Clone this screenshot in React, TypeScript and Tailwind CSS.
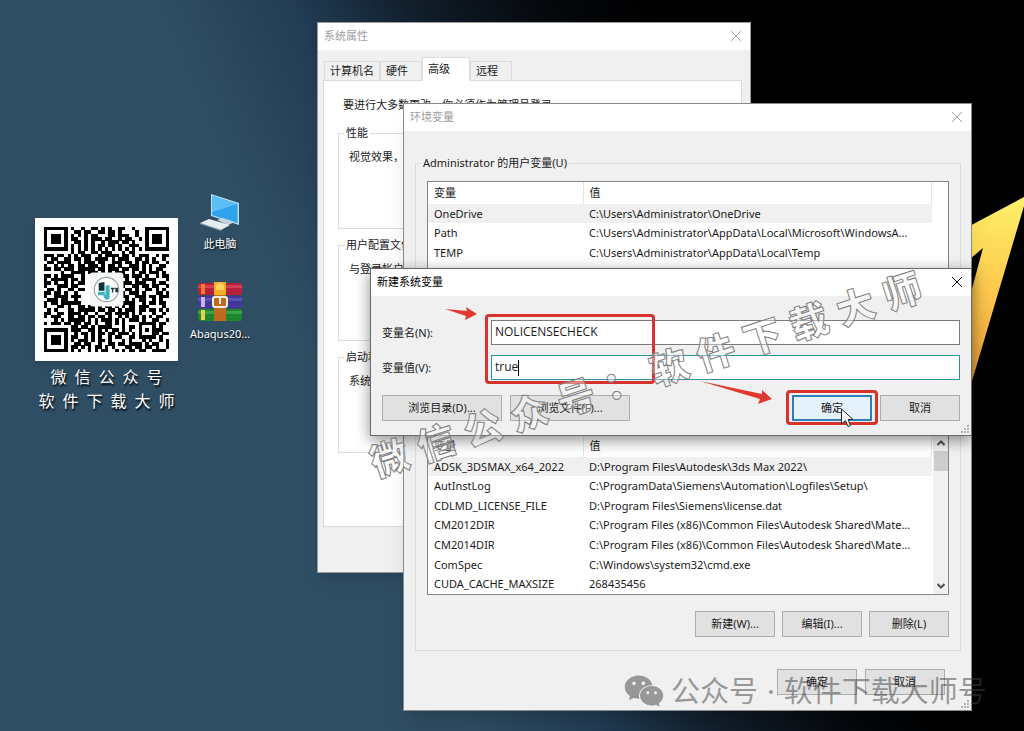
import React from 'react';
import { AiFillWechat } from 'react-icons/ai';

type Variable = { name: string; value: string };

const userVariables: Variable[] = [
  { name: 'OneDrive', value: 'C:\\Users\\Administrator\\OneDrive' },
  { name: 'Path', value: 'C:\\Users\\Administrator\\AppData\\Local\\Microsoft\\WindowsA...' },
  { name: 'TEMP', value: 'C:\\Users\\Administrator\\AppData\\Local\\Temp' },
  { name: 'TMP', value: 'C:\\Users\\Administrator\\AppData\\Local\\Temp' },
];

const systemVariables: Variable[] = [
  { name: 'ADSK_3DSMAX_x64_2022', value: 'D:\\Program Files\\Autodesk\\3ds Max 2022\\' },
  { name: 'AutInstLog', value: 'C:\\ProgramData\\Siemens\\Automation\\Logfiles\\Setup\\' },
  { name: 'CDLMD_LICENSE_FILE', value: 'D:\\Program Files\\Siemens\\license.dat' },
  { name: 'CM2012DIR', value: 'C:\\Program Files (x86)\\Common Files\\Autodesk Shared\\Mate...' },
  { name: 'CM2014DIR', value: 'C:\\Program Files (x86)\\Common Files\\Autodesk Shared\\Mate...' },
  { name: 'ComSpec', value: 'C:\\Windows\\system32\\cmd.exe' },
  { name: 'CUDA_CACHE_MAXSIZE', value: '268435456' },
];

// QR modules, 37 x 37; the three finder squares are drawn separately
const qrRows = [
  '........#..#..##.#.#..##..#..........',
  '.........##.##..##.##.#....#.........',
  '........#.#.#.##...##.###..#.........',
  '........##..#.###.##..#.##..#........',
  '.........##.#.#..#.###.##.#..........',
  '........#.#.#.#.##.##.#..###.........',
  '........#.#.#.#.#.#.#.#.#.#.#........',
  '........#.##..##.###...#.##..........',
  '###.##.#.#.###..#.####.##.#.###..#.##',
  '#.##..##.##.##.####.#.###..##.#.#..#.',
  '.##.####..#.###.##..###.##.#.##.##..#',
  '#..#.#.##.##.###.#.##.#..###.#.#..##.',
  '##.##.###.#####.##.###.##.##.#.#.##..',
  '.....#..####.###.#.#.###..#.##.###.#.',
  '##.#.####..#...........##.###.#..#.##',
  '#.#####.##.#............#..#.####...#',
  '##.#..#.#.##...........###.###..#.##.',
  '#...###.##.............#..##.##.##..#',
  '.##.#..##.##............##.#..##.#.#.',
  '##.##.#..#.............#.###.#...##.#',
  '#..####.###............##..###.##.###',
  '.###.##..#..............#.#.##..#.#..',
  '#.##.######............####..#.##.##.',
  '#...##.#..##.##.#.##.#.#.##.###....#.',
  '.#.#...##.#####.##.##.#.###.##.##.#.#',
  '##..##.####.#..#..##.####.#.#...#..#.',
  '#.###..##.##.##.##.#..#.#.##.#.#.##..',
  '...#.#.#####.#.#.###.#.#.###.#..##..#',
  '#.###.##.##.##.#..##.#.#....#####.##.',
  '........##.##.#.####...#.##.#...#.#..',
  '........###..##.#.#.##.#.#..#.#.###..',
  '.........#.##.#.##.##.###.#.#...##.##',
  '........##..#.#.#..#.##..##.#####.#..',
  '........#.###.#.##.#...#.#...#.#..#.#',
  '.........##.##..#..##.##.####.#.##..#',
  '........##.#.#.##.#.#...##.##.##.#..#.',
  '........#.#..#.#.##..#.#.##.##..####.',
];

const buttonBase =
  'flex items-center justify-center h-[26px] border border-[#adadad] bg-[#e1e1e1] hover:border-[#0078d7] hover:bg-[#e5f1fb]';

const PushButton: React.FC<{ label: string; wide?: boolean }> = ({ label, wide }) => (
  <button type="button" className={`${buttonBase} ${wide ? 'w-[120px]' : 'w-20'}`}>
    {label}
  </button>
);

const TitleBar: React.FC<{ title: string; active?: boolean }> = ({ title, active }) => (
  <header
    className={`flex h-[27px] items-center justify-between bg-white pb-0.5 pl-1.5 pr-2 ${
      active ? 'text-black' : 'text-[#a0a0a0]'
    }`}
  >
    <h2>{title}</h2>
    <button type="button" aria-label="关闭">
      <svg className="size-3" viewBox="0 0 12 12" fill="none" stroke="currentColor">
        <path d="M1 1l10 10M11 1L1 11" />
      </svg>
    </button>
  </header>
);

const ResizeGrip: React.FC = () => (
  <svg className="absolute bottom-0.5 right-0.5 size-2" viewBox="0 0 8 8" fill="#b4b4b4">
    <path d="M6 0h2v2h-2zM3 3h2v2h-2zM6 3h2v2h-2zM0 6h2v2h-2zM3 6h2v2h-2zM6 6h2v2h-2z" />
  </svg>
);

const VariableTable: React.FC<{ rows: Variable[] }> = ({ rows }) => (
  <table className="w-[504px] table-fixed text-left">
    <thead>
      <tr className="h-[22px]">
        <th className="w-[155px] border-r border-[#e5e5e5] pl-1.5 font-normal">变量</th>
        <th className="border-r border-[#e5e5e5] pl-1.5 font-normal">值</th>
      </tr>
    </thead>
    <tbody>
      {rows.map((row) => (
        <tr key={row.name} className="h-[19px] even:h-5 first:bg-[#f0f0f0]">
          <td className="whitespace-nowrap pl-1.5">{row.name}</td>
          <td className="whitespace-nowrap pl-1.5">{row.value}</td>
        </tr>
      ))}
    </tbody>
  </table>
);

const VariableButtons: React.FC<{ keys: string[] }> = ({ keys }) => (
  <div className="mt-4 flex justify-end gap-[7px]">
    <PushButton label={`新建(${keys[0]})...`} />
    <PushButton label={`编辑(${keys[1]})...`} />
    <PushButton label={`删除(${keys[2]})`} />
  </div>
);

const SystemProperties: React.FC = () => (
  <section className="absolute left-[317px] top-[22px] flex h-[551px] w-[434px] flex-col border border-[#9a9a9a] bg-[#f0f0f0] shadow-lg">
    <TitleBar title="系统属性" />
    <div className="flex grow flex-col pb-[45px] pl-[5px] pr-2 pt-[7px]">
      <div className="flex items-end pl-px" role="tablist">
        {['计算机名', '硬件', '高级', '远程'].map((tab) => (
          <button
            key={tab}
            type="button"
            role="tab"
            aria-selected={tab === '高级'}
            className="-mb-px h-5 border border-[#dcdcdc] px-[5px] text-left not-first:w-[42px] aria-selected:z-10 aria-selected:h-6 aria-selected:w-12 aria-selected:border-b-white aria-selected:bg-white"
          >
            {tab}
          </button>
        ))}
      </div>
      <div className="grow border border-[#dcdcdc] bg-white px-3.5 pt-4">
        <p className="mb-3 pl-[5px]">要进行大多数更改，你必须作为管理员登录。</p>
        {[
          ['性能', '视觉效果，处理器计划，内存使用，以及虚拟内存'],
          ['用户配置文件', '与登录帐户相关的桌面设置'],
          ['启动和故障恢复', '系统启动、系统故障和调试信息'],
        ].map(([legend, text]) => (
          <fieldset key={legend} className="mb-2 h-[104px] border border-[#dcdcdc] px-2.5 pt-2">
            <legend className="-ml-[5px] px-0.5">{legend}</legend>
            <p>{text}</p>
          </fieldset>
        ))}
      </div>
    </div>
  </section>
);

const EnvironmentVariables: React.FC = () => (
  <section className="absolute left-[403px] top-[103px] w-[569px] border border-[#8a8a8a] bg-[#f0f0f0] shadow-xl">
    <TitleBar title="环境变量" />
    <div className="pb-[15px] pl-[11px] pr-2.5 pt-6">
      <fieldset className="border border-[#dcdcdc] px-[11px] pb-[13px] pt-2.5">
        <legend className="-ml-1.5 px-0.5">Administrator 的用户变量(U)</legend>
        <div className="h-[156px] border border-[#828790] bg-white">
          <VariableTable rows={userVariables} />
        </div>
        <VariableButtons keys={['N', 'E', 'D']} />
      </fieldset>
      <fieldset className="mt-[15px] border border-[#dcdcdc] px-[11px] pb-[13px] pt-2.5">
        <legend className="-ml-1.5 px-0.5">系统变量(S)</legend>
        <div className="flex h-[161px] justify-between border border-[#828790] bg-white">
          <VariableTable rows={systemVariables} />
          <div className="flex w-[15px] flex-col items-center justify-between bg-[#f0f0f0] py-1">
            <div className="flex w-full flex-col items-center gap-1">
              <svg className="size-2" viewBox="0 0 8 8" fill="none" stroke="#505050" strokeWidth="2">
                <path d="M0.5 6L4 2.5L7.5 6" />
              </svg>
              <div className="h-5 w-3.5 bg-[#cdcdcd]" />
            </div>
            <svg className="size-2" viewBox="0 0 8 8" fill="none" stroke="#505050" strokeWidth="2">
              <path d="M0.5 2L4 5.5L7.5 2" />
            </svg>
          </div>
        </div>
        <VariableButtons keys={['W', 'I', 'L']} />
      </fieldset>
      <div className="mt-[18px] flex justify-end gap-2 pr-4">
        <PushButton label="确定" />
        <PushButton label="取消" />
      </div>
    </div>
    <ResizeGrip />
  </section>
);

const NewVariableDialog: React.FC = () => (
  <section
    role="dialog"
    className="absolute left-[370px] top-[268px] w-[602px] border border-[#6a6a6a] bg-[#f0f0f0] shadow-[0_4px_14px_rgba(0,0,0,0.45)]"
  >
    <TitleBar title="新建系统变量" active />
    <div className="flex flex-col gap-2.5 px-[11px] pb-3.5 pt-6">
      <div className="flex items-center">
        <label htmlFor="variable-name" className="w-[109px]">
          变量名(N):
        </label>
        <input
          id="variable-name"
          defaultValue="NOLICENSECHECK"
          className="h-[25px] grow border border-[#7a7a7a] bg-white px-[3px] pb-0.5 font-['Open_Sans',sans-serif] text-xs leading-4 outline-none"
        />
      </div>
      <div className="flex items-center">
        <label htmlFor="variable-value" className="w-[109px]">
          变量值(V):
        </label>
        <div className="flex h-[25px] grow items-center border border-[#2f8fa3] bg-white px-[3px]">
          <input
            id="variable-value"
            defaultValue="true"
            className="field-sizing-content pb-0.5 font-['Open_Sans',sans-serif] text-xs leading-4 outline-none"
          />
          <span className="h-4 w-px bg-black" />
        </div>
      </div>
      <div className="mt-[5px] flex gap-2">
        <PushButton label="浏览目录(D)..." wide />
        <PushButton label="浏览文件(F)..." wide />
        <button
          type="button"
          className="ml-auto flex h-[26px] w-20 items-center justify-center border-2 border-[#2c7fb8] bg-[#e5f1fb]"
        >
          确定
        </button>
        <PushButton label="取消" />
      </div>
    </div>
    <ResizeGrip />
  </section>
);

const QrCode: React.FC = () => (
  <svg className="size-[143px] bg-white shadow-md" viewBox="-2.6 -2.6 42.2 42.2" shapeRendering="crispEdges">
    {qrRows.map((row, y) =>
      row.split('').map((cell, x) => cell === '#' && <rect key={`${x}-${y}`} x={x} y={y} width="1.05" height="1.05" />),
    )}
    {[
      [0, 0],
      [30, 0],
      [0, 30],
    ].map(([x, y]) => (
      <g key={`${x}-${y}`}>
        <rect x={x} y={y} width="7" height="7" />
        <rect x={x + 1} y={y + 1} width="5" height="5" fill="white" />
        <rect x={x + 2} y={y + 2} width="3" height="3" />
      </g>
    ))}
    <g shapeRendering="auto">
      <rect x="13.5" y="13.5" width="10" height="10" rx="1" fill="#f6f8f8" />
      <circle cx="18.5" cy="18.5" r="3.6" fill="#fdffff" stroke="#9aa5aa" strokeWidth="0.35" />
      <path d="M16.2 16.6l1.7-.3v2.6h-1.7z" fill="#10303a" />
      <path d="M16 19.2h2v1h-2zM18.2 17.4l1.2-.2v4l-1 .4-.9-1.2.7-.4z" fill="#3fb4bf" />
      <path d="M19.8 18h1.1v.4h-.4v1h-.4v-1h-.3zM21.1 18h.8v1.3h-.8z" fill="#20343a" />
    </g>
  </svg>
);

const DesktopIcons: React.FC = () => (
  <div className="absolute left-[180px] top-[192px] flex w-20 flex-col items-center gap-[30px] text-white [text-shadow:1px_1px_2px_#000]">
    <figure className="flex flex-col items-center gap-1">
      <svg className="h-10 w-[42px]" viewBox="0 0 42 40">
        <path d="M12 2l28 9v22l-28-9z" fill="#bfe4f7" />
        <path d="M13.2 3.6l25.4 8.3v19.4l-25.4-8z" fill="#2fa4ec" />
        <path d="M13.2 3.6l25.4 8.3-25.4 8z" fill="#5cc0f7" />
        <path d="M18 28l6-2 12 4-7 3z" fill="#c3d4de" />
        <path d="M1 31l9-4 21 6-9 5z" fill="#e6edf1" />
        <path d="M1 31l21 7v1l-21-7z" fill="#90a3af" />
      </svg>
      <figcaption>此电脑</figcaption>
    </figure>
    <figure className="flex flex-col items-center gap-1">
      <svg className="h-10 w-[46px]" viewBox="0 0 46 40">
        <rect x="1" y="1" width="44" height="12" rx="2" fill="#b71f3c" />
        <rect x="1" y="3" width="44" height="3" fill="#d23d58" />
        <rect x="1" y="14" width="44" height="12" rx="2" fill="#42389c" />
        <rect x="1" y="16" width="44" height="3" fill="#5d52b6" />
        <rect x="1" y="27" width="44" height="12" rx="2" fill="#1f8530" />
        <rect x="1" y="29" width="44" height="3" fill="#38a648" />
        <path d="M4 2h4v10h-4z" fill="#ef7a30" />
        <path d="M4 15h4v10h-4z" fill="#c9b4e8" />
        <path d="M4 28h4v10h-4z" fill="#e6d24a" />
        <rect x="17" y="0" width="12" height="13" fill="#f0b02c" />
        <rect x="17" y="13" width="12" height="26" fill="#c06a1e" />
        <path d="M19 5a4 4 0 0 1 8 0v3h-8z" fill="#ffd25a" />
        <rect x="16" y="15" width="14" height="10" rx="2" fill="none" stroke="#f4eee4" strokeWidth="2" />
        <path d="M22 14h2v8h-2z" fill="#f4eee4" />
      </svg>
      <figcaption>Abaqus20...</figcaption>
    </figure>
  </div>
);

const SpacedText: React.FC<{ text: string; className: string }> = ({ text, className }) => (
  <p className={`flex ${className}`}>
    {text.split('').map((char, i) => (
      <span key={i}>{char}</span>
    ))}
  </p>
);

export default function App() {
  return (
    <main className="relative min-h-screen overflow-hidden bg-[linear-gradient(67deg,#2f4e64_0%,#2f4e64_35%,#223d55_45%,#111e2b_54%,#05080c_64%,#000_72%)] font-['Noto_Sans','Noto_Sans_CJK_SC',sans-serif] text-[11px] leading-4 text-[#1a1a1a]">
      {/* Wallpaper */}
      <svg className="absolute left-[964px] top-[190px] h-[210px] w-[60px]" viewBox="964 190 60 210">
        <defs>
          <linearGradient id="gold" x1="0" y1="0" x2="0" y2="1">
            <stop offset="0" stopColor="#fff06a" />
            <stop offset="0.45" stopColor="#fdc84c" />
            <stop offset="1" stopColor="#e89238" />
          </linearGradient>
        </defs>
        <path d="M1024 197L964 229V264L983 248L964 318V408L1024 206z" fill="url(#gold)" />
      </svg>

      {/* QR card */}
      <aside className="absolute left-[35px] top-[218px] flex flex-col items-center text-base text-white [text-shadow:1px_2px_2px_#000]">
        <QrCode />
        <SpacedText text="微信公众号" className="mt-1 gap-2 leading-6" />
        <SpacedText text="软件下载大师" className="gap-2 leading-6" />
      </aside>

      <DesktopIcons />

      {/* Windows */}
      <SystemProperties />
      <EnvironmentVariables />
      <NewVariableDialog />

      {/* Highlights */}
      <div className="absolute left-[485px] top-[314px] h-[70px] w-[170px] rounded-sm border-3 border-[#d8322e]" />
      <div className="absolute left-[786px] top-[390px] h-[35px] w-[92px] rounded-sm border-3 border-[#d8322e]" />
      <svg className="absolute left-[445px] top-[306px] h-4 w-8" viewBox="0 0 32 16" fill="#e03a30">
        <path d="M0 3L22 5L21 1L32 8L20 14L21 10z" />
      </svg>
      <svg className="absolute left-[700px] top-[380px] h-6 w-[72px]" viewBox="0 0 72 24" fill="#e03a30">
        <path d="M0 1L62 14L62 10L72 19L58 24L60 19z" />
      </svg>
      <svg className="absolute left-[840px] top-[408px] h-5 w-4" viewBox="0 0 16 20">
        <path d="M1.5 1v15l4-3.500 2.500 6 2.500-1-2.500-6h5z" fill="#fff" stroke="#222" />
      </svg>

      {/* Watermarks */}
      <SpacedText
        text="微信公众号：软件下载大师"
        className="pointer-events-none absolute left-[357px] top-[344px] -rotate-[18deg] gap-[11px] text-[38px] leading-[60px] font-black text-white/40 [-webkit-text-stroke:1px_#808080]"
      />
      <div className="pointer-events-none absolute left-[622px] top-[669px] flex items-center gap-[5px] whitespace-nowrap text-[29px] leading-10 text-[#404040]/50">
        <AiFillWechat className="size-11" />
        <p className="flex gap-[9px]">
          <span>公众号</span>
          <span>·</span>
          <span>软件下载大师号</span>
        </p>
      </div>
    </main>
  );
}
